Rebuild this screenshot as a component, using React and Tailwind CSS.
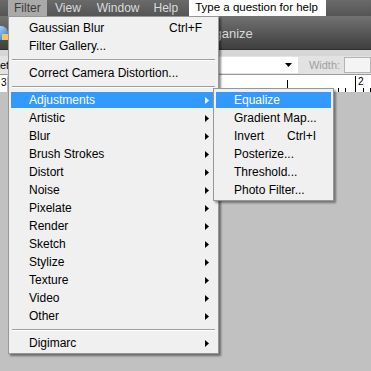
import React from "react";

const font = { fontFamily: '"Liberation Sans", Arial, sans-serif' };

const Arrow = ({ white }) => (
  <svg width="4" height="7" viewBox="0 0 4 7" className="shrink-0">
    <path d="M0 0 L4 3.5 L0 7 Z" fill={white ? "#ffffff" : "#000000"} />
  </svg>
);

const Separator = () => (
  <div className="h-[9px] flex flex-col justify-center px-[3px]">
    <div className="h-px bg-[#a0a0a0]" />
    <div className="h-px bg-white" />
  </div>
);

const Item = ({ label, shortcut, arrow, active, labelWidth }) => (
  <div className="h-[18px] px-[2px] py-px">
    <div
      className={`h-[16px] flex items-center pl-[18px] pr-[7px] ${
        active ? "bg-[#3399ff] text-white" : "text-black"
      }`}
    >
      <span className="whitespace-nowrap" style={shortcut ? { minWidth: labelWidth } : undefined}>
        {label}
      </span>
      {shortcut && <span className="whitespace-nowrap">{shortcut}</span>}
      {arrow && (
        <span className="ml-auto flex items-center">
          <Arrow white={active} />
        </span>
      )}
    </div>
  </div>
);

const filterGroups = [
  "Artistic",
  "Blur",
  "Brush Strokes",
  "Distort",
  "Noise",
  "Pixelate",
  "Render",
  "Sketch",
  "Stylize",
  "Texture",
  "Video",
  "Other",
];

const adjustments = ["Gradient Map...", "Invert", "Posterize...", "Threshold...", "Photo Filter..."];

const Ruler = () => (
  <svg width="371" height="16" className="block">
    <rect x="0" y="0" width="371" height="16" fill="#ffffff" />
    <line x1="8" y1="0" x2="8" y2="16" stroke="#7a7a7a" />
    <text x="1" y="10" fontSize="10" fill="#000" style={font}>3</text>
    {[229, 236, 243, 250, 257, 264, 271, 278, 296, 303, 310, 317, 324, 331, 338, 345, 363, 370].map((x) => (
      <line key={x} x1={x + 0.5} y1="12" x2={x + 0.5} y2="16" stroke="#000" />
    ))}
    <line x1="287.5" y1="4" x2="287.5" y2="16" stroke="#000" />
    <line x1="355.5" y1="0" x2="355.5" y2="16" stroke="#000" />
    <text x="358" y="9" fontSize="10" fill="#000" style={font}>2</text>
  </svg>
);

export default function App() {
  return (
    <div className="relative w-[371px] h-[371px] overflow-hidden bg-[#c1c1c1] text-[12px]" style={font}>
      {/* menu bar */}
      <div className="h-[16px] bg-gradient-to-b from-[#6a6a6a] to-[#555555] flex items-center text-[#dcdcdc]">
        <div className="ml-[8px] w-[39px] h-full bg-[#a9a9a9] text-[#3c3c3c] flex items-center pl-[6px]">Filter</div>
        <div className="ml-[8px]">View</div>
        <div className="ml-[16px]">Window</div>
        <div className="ml-[14px]">Help</div>
        <div className="ml-[11px] w-[137px] h-full bg-white text-black text-[11.5px] flex items-center pl-[6px]">
          Type a question for help
        </div>
      </div>

      {/* app bar */}
      <div className="h-[34px] bg-gradient-to-b from-[#727272] to-[#3f3f3f] flex items-center relative border-b border-[#2e2e2e]">
        <div className="absolute left-[-6px] top-[10px] w-[14px] h-[14px] rounded-full bg-gradient-to-br from-[#cfe6ff] to-[#2f6fc0]" />
        <div className="absolute left-[2px] top-[18px] w-[6px] h-[6px] bg-[#e7c86a]" />
        <div className="ml-[200px] mt-[3px] text-[#d8d8d8] text-[13px]">Organize</div>
      </div>

      {/* options bar */}
      <div className="h-[25px] bg-[#e2e2e2] flex items-center border-b border-[#9a9a9a] relative">
        <div className="absolute top-0 left-0 right-0 h-[6px] bg-[#d6d6d6]" />
        <div className="relative w-[8px] mt-[6px] text-[11px] text-black leading-none">et</div>
        <div className="relative ml-[210px] mt-[6px] w-[89px] h-[16px] bg-white border-l border-[#6d6d6d] flex items-center justify-end pr-[6px]">
          <svg width="7" height="4" viewBox="0 0 7 4">
            <path d="M0 0 H7 L3.5 4 Z" fill="#000" />
          </svg>
        </div>
        <div className="relative ml-[11px] mt-[6px] text-[#a0a0a0] text-[11px]">Width:</div>
        <div className="relative ml-[4px] mt-[6px] w-[30px] h-[16px] bg-[#f4f4f4] border border-[#b4b4b4]" />
      </div>

      {/* ruler */}
      <div className="border-t border-white">
        <Ruler />
      </div>

      {/* Filter menu */}
      <div className="absolute left-[8px] top-[16px] w-[211px] h-[338px] bg-[#f0f0f0] border border-[#979797] shadow-[2px_2px_2px_rgba(0,0,0,0.45)] pt-[2px]">
        <Item label="Gaussian Blur" shortcut="Ctrl+F" labelWidth="140px" />
        <Item label="Filter Gallery..." />
        <Separator />
        <Item label="Correct Camera Distortion..." />
        <Separator />
        <Item label="Adjustments" arrow active />
        {filterGroups.map((g) => (
          <Item key={g} label={g} arrow />
        ))}
        <Separator />
        <Item label="Digimarc" arrow />
      </div>

      {/* Adjustments submenu */}
      <div className="absolute left-[213px] top-[88px] w-[121px] h-[113px] bg-[#f0f0f0] border border-[#979797] shadow-[2px_2px_2px_rgba(0,0,0,0.4)] pt-[2px]">
        <Item label="Equalize" active />
        {adjustments.map((a) => (
          <Item key={a} label={a} shortcut={a === "Invert" ? "Ctrl+I" : null} labelWidth="53px" />
        ))}
      </div>
    </div>
  );
}
